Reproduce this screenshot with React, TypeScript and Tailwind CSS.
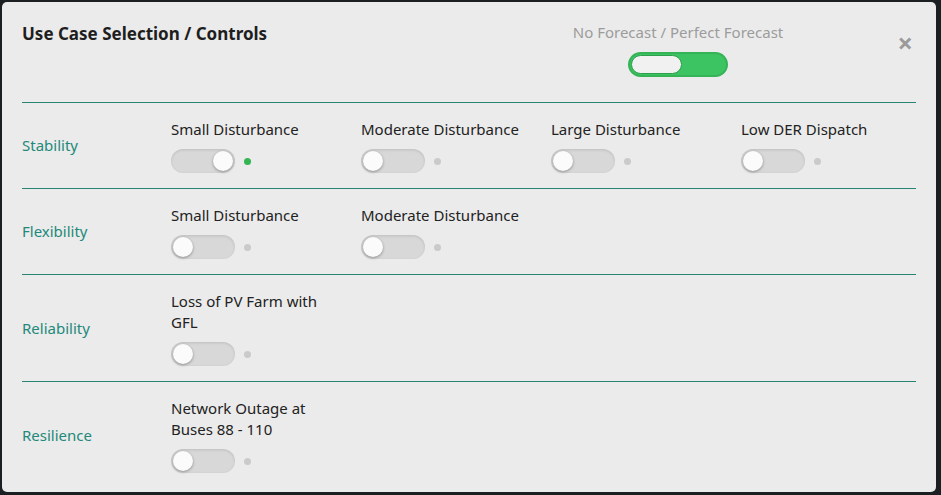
import React from "react"

type Item = { label: React.ReactNode; on?: boolean }
type Group = { name: string; items: Item[] }

const groups: Group[] = [
  {
    name: "Stability",
    items: [
      { label: "Small Disturbance", on: true },
      { label: "Moderate Disturbance" },
      { label: "Large Disturbance" },
      { label: "Low DER Dispatch" },
    ],
  },
  {
    name: "Flexibility",
    items: [{ label: "Small Disturbance" }, { label: "Moderate Disturbance" }],
  },
  {
    name: "Reliability",
    items: [
      {
        label: (
          <>
            Loss of PV Farm with
            <br />
            GFL
          </>
        ),
      },
    ],
  },
  {
    name: "Resilience",
    items: [
      {
        label: (
          <>
            Network Outage at
            <br />
            Buses 88 - 110
          </>
        ),
      },
    ],
  },
]

function Switch({ on }: { on?: boolean }) {
  return (
    <div className="flex items-center gap-[9px]">
      <div
        className={
          "flex h-[24px] w-[64px] items-center rounded-full bg-[#d8d8d8] px-[2px] shadow-[inset_0_1px_3px_rgba(0,0,0,0.12)] " +
          (on ? "justify-end" : "justify-start")
        }
      >
        <div className="h-[20px] w-[20px] rounded-full bg-[#fbfbfb] shadow-[0_1px_3px_rgba(0,0,0,0.35)]" />
      </div>
      <div className={"h-[7px] w-[7px] rounded-full " + (on ? "bg-[#35b552]" : "bg-[#cacaca]")} />
    </div>
  )
}

export default function App() {
  return (
    <div className="h-[495px] w-[941px] bg-[#1b1f21] pb-[3px] pl-[2px] pr-[5px] pt-[2px] font-['Noto_Sans',sans-serif]">
      <div className="relative h-[490px] overflow-hidden rounded-[5px] bg-[#ebebeb] px-[20px]">
        <div className="flex h-[100px]">
          <div className="w-[536px] shrink-0 pt-[21px] text-[17px] font-bold leading-[22px] text-[#1e1e1e]">
            Use Case Selection / Controls
          </div>
          <div className="flex w-[240px] shrink-0 flex-col items-center pt-[20px]">
            <div className="text-[15px] leading-[20px] text-[#9c9c9c]">No Forecast / Perfect Forecast</div>
            <div className="mt-[10px] flex h-[25px] w-[100px] items-center rounded-full border-2 border-[#34b456] bg-[#3dc462] p-[1px]">
              <div className="h-[19px] w-[51px] rounded-full border border-[#2f9e4c] bg-[#f1f1f1]" />
            </div>
          </div>
        </div>
        <button className="absolute right-[23px] top-[27px] text-[27px] font-bold leading-[27px] text-[#9b9b9b]">
          ×
        </button>

        {groups.map((g) => (
          <div key={g.name} className="flex items-center border-t border-[#2a8474]">
            <div className="w-[149px] shrink-0 text-[15px] text-[#22897a]">{g.name}</div>
            <div className="flex flex-1 pb-[15px] pt-[16px]">
              {g.items.map((it, i) => (
                <div key={i} className="w-[190px] shrink-0">
                  <div className="text-[15px] leading-[21px] text-[#222]">{it.label}</div>
                  <div className="mt-[9px]">
                    <Switch on={it.on} />
                  </div>
                </div>
              ))}
            </div>
          </div>
        ))}
      </div>
    </div>
  )
}
